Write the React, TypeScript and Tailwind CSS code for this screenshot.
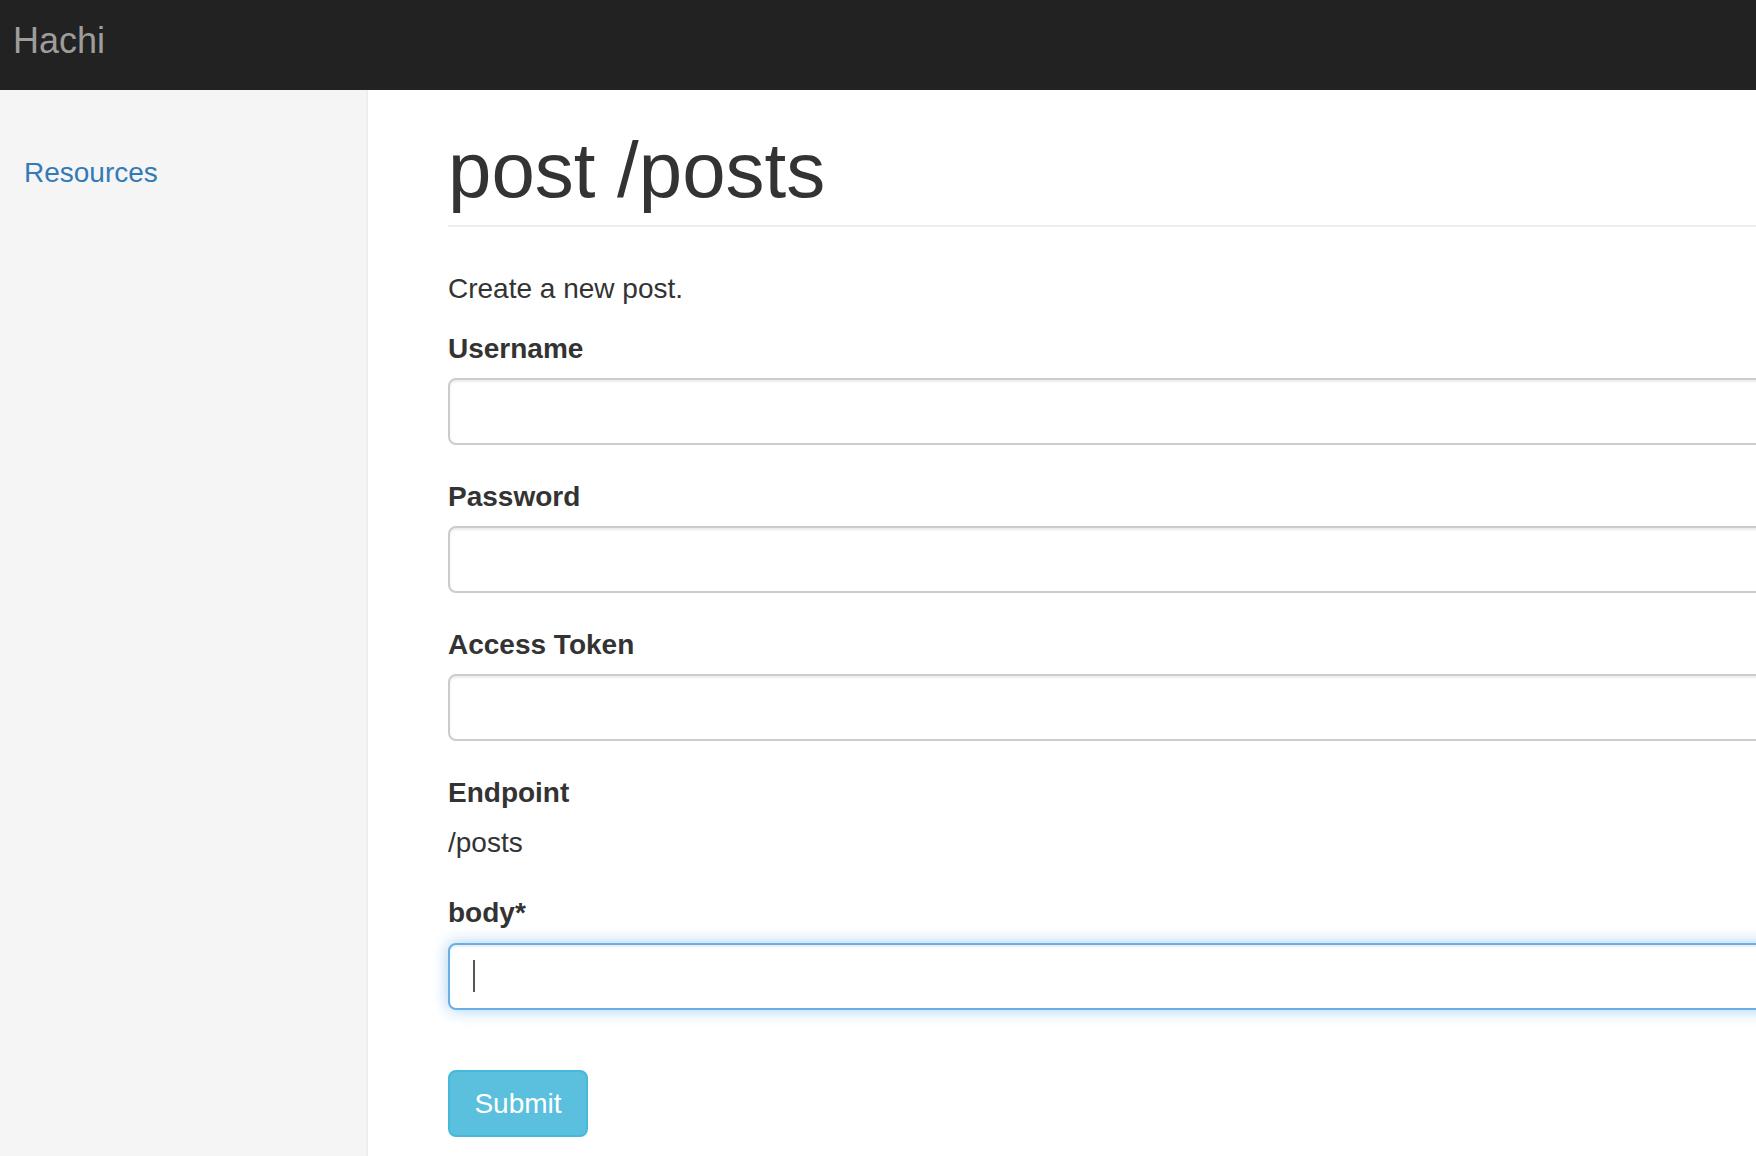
import React from "react";

// Champs du formulaire, dans l'ordre de la maquette.
const CHAMPS = ["Username", "Password", "Access Token"];

function Champ({ label }: { label: string }) {
  return (
    <div className="mb-[31px]">
      <label className="mb-[10px] block pt-[1px] text-[28px] font-bold leading-[39px]">{label}</label>
      <input
        type="text"
        className="block h-[67px] w-full rounded-[8px] border-2 border-[#ccc] bg-white px-[24px] shadow-[inset_0_2px_2px_rgba(0,0,0,0.075)] outline-none"
      />
    </div>
  );
}

export default function App() {
  return (
    <div
      className="flex min-h-screen flex-col overflow-hidden bg-white text-[#333]"
      style={{ fontFamily: '"Liberation Sans", Arial, sans-serif' }}
    >
      {/* Barre du haut */}
      <header className="h-[90px] shrink-0 bg-[#222] pl-[13px] pt-[23px]">
        <span className="text-[36px] leading-[36px] text-[#9d9d9d]">Hachi</span>
      </header>

      <div className="flex flex-1">
        {/* Colonne latérale */}
        <aside className="w-[368px] shrink-0 border-r-2 border-[#eee] bg-[#f5f5f5] pl-[24px] pt-[63px]">
          <a href="#" className="text-[28px] leading-[40px] text-[#337ab7]">
            Resources
          </a>
        </aside>

        {/* Contenu principal */}
        <main className="min-w-0 flex-1 overflow-hidden pl-[80px]">
          <div className="w-[1400px]">
            <div className="border-b-2 border-[#eee] pb-[12px] pt-[37px]">
              <h1 className="text-[78px] font-normal leading-[86px]">post /posts</h1>
            </div>

            <p className="mt-[42px] text-[28px] leading-[40px]">Create a new post.</p>

            <form className="mt-[19px]" onSubmit={(e) => e.preventDefault()}>
              {CHAMPS.map((c) => (
                <Champ key={c} label={c} />
              ))}

              <div className="mb-[29px]">
                <div className="mb-[10px] pt-[1px] text-[28px] font-bold leading-[39px]">Endpoint</div>
                <div className="pt-[1px] text-[28px] leading-[40px]">/posts</div>
              </div>

              <div className="mb-[60px]">
                <label className="mb-[11px] block pt-[1px] text-[28px] font-bold leading-[39px]">body*</label>
                <div className="relative h-[67px] w-full rounded-[8px] border-2 border-[#66afe9] bg-white shadow-[inset_0_2px_2px_rgba(0,0,0,0.075),0_0_16px_rgba(102,175,233,0.6)]">
                  {/* Curseur de saisie */}
                  <span className="absolute left-[23px] top-[15px] h-[32px] w-[2px] bg-[#555]" />
                </div>
              </div>

              <button
                type="submit"
                className="h-[67px] w-[140px] rounded-[8px] border-2 border-[#46b8da] bg-[#5bc0de] pt-[1px] text-[28px] leading-[40px] text-white"
              >
                Submit
              </button>
            </form>
          </div>
        </main>
      </div>
    </div>
  );
}
